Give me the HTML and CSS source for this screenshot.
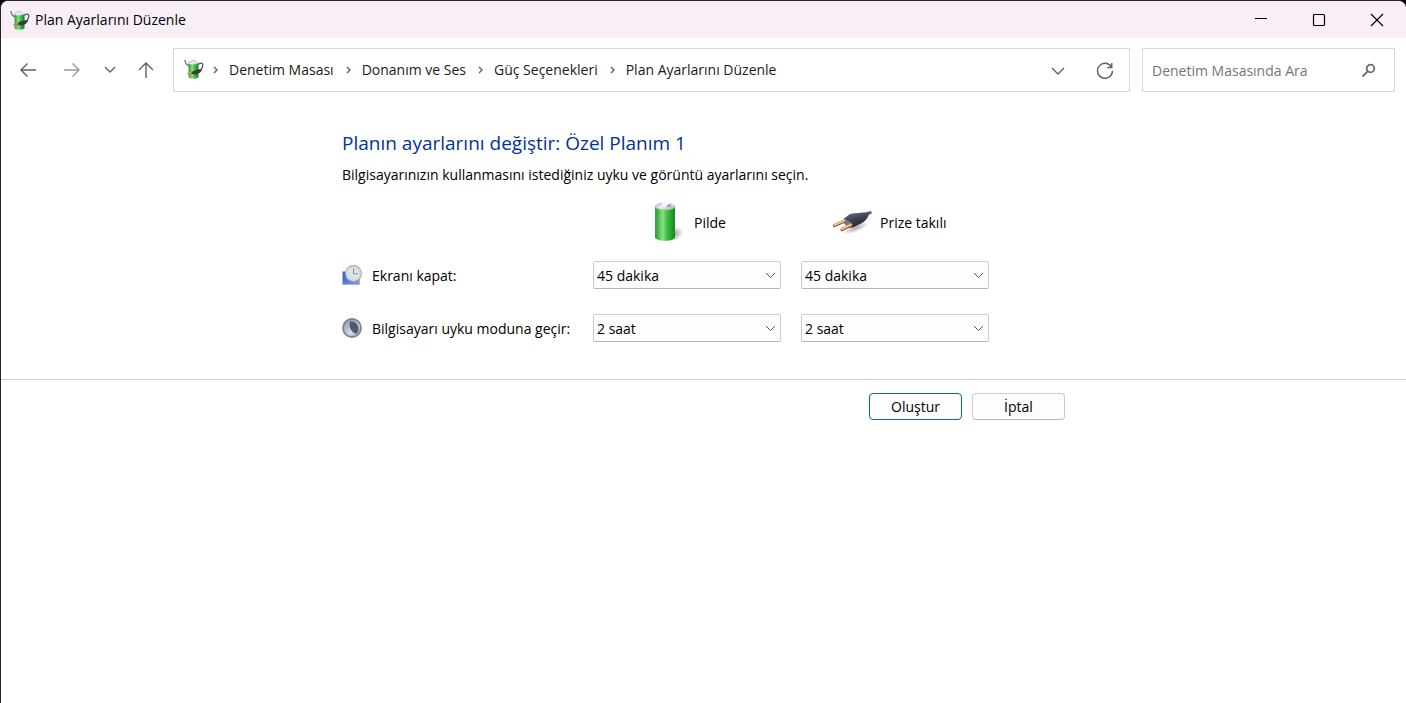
FILE: index.html
```html
<!DOCTYPE html>
<html lang="tr">
<head>
<meta charset="utf-8">
<meta name="viewport" content="width=device-width, initial-scale=1">
<title>Plan Ayarlarını Düzenle</title>
<link rel="stylesheet" href="styles.css">
</head>
<body>
<svg class="defs" width="0" height="0" aria-hidden="true">
  <defs>
    <linearGradient id="green" x1="0" x2="1" y1="0" y2="0">
      <stop offset="0" stop-color="#3a9c40"/><stop offset=".12" stop-color="#3fae43"/><stop offset=".38" stop-color="#86e285"/><stop offset=".6" stop-color="#3fc043"/><stop offset="1" stop-color="#14861d"/>
    </linearGradient>
    <linearGradient id="metal" x1="0" x2="1" y1="0" y2="1">
      <stop offset="0" stop-color="#a4a9bd"/><stop offset=".5" stop-color="#f4f5fa"/><stop offset="1" stop-color="#9ba1b5"/>
    </linearGradient>
    <symbol id="power" viewBox="0 0 20 20">
      <path d="M14.500 5.500c2-2.500 4.500-1.500 4.300 1-.2 2.500-1.800 3.500-2.300 6" fill="none" stroke="#4a4f70" stroke-width="1.300"/>
      <path d="M.8 1c.4 3 1.500 5 4.200 5.800" fill="none" stroke="#5a607c" stroke-width="1.200"/>
      <path d="M4.500 3.500v14.500c0 2.200 10 2.200 10 0V3.500z" fill="url(#green)"/>
      <ellipse cx="9.500" cy="3.500" rx="5" ry="2" fill="url(#metal)"/>
      <ellipse cx="9.500" cy="1.800" rx="2.500" ry="1.300" fill="#d0d6e4"/>
      <path d="M6.500 13.500l4-2 5.500-1.500 1.700 1-1.700 2.700-4 2-3.500-.2z" fill="#3c3c48"/>
      <path d="M7.500 13.200l-4 1.800M9.500 15.500l-4 1.500" stroke="#c99a58" stroke-width="1.300" stroke-linecap="round"/>
    </symbol>
  </defs>
</svg>
<div class="window">
  <header class="titlebar">
    <svg class="app-icon"><use href="#power"/></svg>
    <span class="title">Plan Ayarlarını Düzenle</span>
    <div class="caption-buttons">
      <button class="caption-button" type="button" aria-label="Simge durumuna küçült"><svg width="14" height="14"><path d="M1 5.500h12"/></svg></button>
      <button class="caption-button" type="button" aria-label="Ekranı kapla"><svg width="14" height="14"><rect x="1.500" y="1.500" width="11" height="11" rx="1"/></svg></button>
      <button class="caption-button" type="button" aria-label="Kapat"><svg width="14" height="14"><path d="M1 1l12 12M13 1L1 13"/></svg></button>
    </div>
  </header>

  <nav class="toolbar">
    <div class="history">
      <button class="nav-button" type="button" aria-label="Geri"><svg width="18" height="18"><path d="M2 9h15M8.500 2.500L2 9l6.500 6.500"/></svg></button>
      <button class="nav-button dim" type="button" aria-label="İleri"><svg width="18" height="18"><path d="M1 9h15M9.500 2.500L16 9l-6.500 6.500"/></svg></button>
      <button class="nav-button small" type="button" aria-label="Son konumlar"><svg width="12" height="18"><path d="M1 6l5 5 5-5"/></svg></button>
      <button class="nav-button" type="button" aria-label="Yukarı"><svg width="18" height="18"><path d="M9 17V2M2 9l7-7 7 7"/></svg></button>
    </div>
    <div class="address">
      <svg class="address-icon"><use href="#power"/></svg>
      <ol class="crumbs">
        <li><svg width="6" height="8"><path d="M1 1l3 3-3 3"/></svg><a href="#">Denetim Masası</a></li>
        <li><svg width="6" height="8"><path d="M1 1l3 3-3 3"/></svg><a href="#">Donanım ve Ses</a></li>
        <li><svg width="6" height="8"><path d="M1 1l3 3-3 3"/></svg><a href="#">Güç Seçenekleri</a></li>
        <li><svg width="6" height="8"><path d="M1 1l3 3-3 3"/></svg><a href="#">Plan Ayarlarını Düzenle</a></li>
      </ol>
      <button class="address-button" type="button" aria-label="Önceki konumlar"><svg width="14" height="18"><path d="M1 7l6 6 6-6"/></svg></button>
      <button class="address-button" type="button" aria-label="Yenile"><svg width="18" height="18"><path d="M15.500 6A7.500 7.500 0 1 0 16.500 10M15.800 2v4.500h-4.500"/></svg></button>
    </div>
    <div class="search">
      <input class="search-input" type="text" placeholder="Denetim Masasında Ara" aria-label="Denetim Masasında Ara">
      <button class="search-button" type="button" aria-label="Ara"><svg width="15" height="15"><circle cx="9.500" cy="5.500" r="3.800"/><path d="M6.800 8.200L1.500 13.500"/></svg></button>
    </div>
  </nav>

  <main class="content">
    <h1 class="heading">Planın ayarlarını değiştir: Özel Planım 1</h1>
    <p class="intro">Bilgisayarınızın kullanmasını istediğiniz uyku ve görüntü ayarlarını seçin.</p>
    <div class="settings">
      <div class="source battery">
        <svg width="40" height="40" viewBox="0 0 40 40">
          <defs><radialGradient id="shade"><stop offset="0" stop-color="#777" stop-opacity=".7"/><stop offset="1" stop-color="#777" stop-opacity="0"/></radialGradient></defs>
          <ellipse cx="28" cy="32" rx="10" ry="7" fill="url(#shade)" transform="rotate(-25 28 32)"/>
          <path d="M9 4.500v30.500c0 5 20 5 20 0V4.500z" fill="url(#green)"/>
          <ellipse cx="19" cy="4.500" rx="10" ry="3.800" fill="#a5d9a9"/>
          <ellipse cx="19" cy="4" rx="9" ry="3.200" fill="url(#metal)"/>
          <ellipse cx="20" cy="2.500" rx="4.500" ry="2" fill="#f8f8ff"/>
          <path d="M20 4l4-2.500 2 2.500-4 1.500z" fill="#a2a5ba"/>
        </svg>
        <span>Pilde</span>
      </div>
      <div class="source plug">
        <svg width="40" height="40" viewBox="0 0 40 40">
          <defs>
            <linearGradient id="body" x1="0" x2=".4" y1="0" y2="1"><stop offset="0" stop-color="#6c7189"/><stop offset=".5" stop-color="#3f4155"/><stop offset="1" stop-color="#242531"/></linearGradient>
            <radialGradient id="shadow"><stop offset="0" stop-color="#555" stop-opacity=".5"/><stop offset="1" stop-color="#555" stop-opacity="0"/></radialGradient>
          </defs>
          <ellipse cx="24" cy="26" rx="14" ry="4" fill="url(#shadow)" transform="rotate(-22 24 26)"/>
          <path d="M33 13c2-2 4-2.500 6.500-2" fill="none" stroke="#5d616d" stroke-width="3"/>
          <path d="M12 16.500l6-4.500c5-1 12-1.500 17-1.500l2 2c-2 5-5 8-10 10l-6 3-3 .5-6-4.500z" fill="url(#body)"/>
          <path d="M12 16.500l6.500 3.500 2.500 5.500-3 .5-6-4.500z" fill="#747889"/>
          <path d="M12.500 19L2.500 23.500M19 23L10 27.500" stroke="#80552d" stroke-width="3.200" stroke-linecap="round"/>
          <path d="M12.500 18.500L2.500 23M19 22.500L10 27" stroke="#efc48b" stroke-width="2" stroke-linecap="round"/>
        </svg>
        <span>Prize takılı</span>
      </div>

      <div class="setting">
        <svg width="20" height="20" viewBox="0 0 20 20">
          <defs><linearGradient id="screen" x1="0" x2="1" y1="0" y2="1"><stop offset="0" stop-color="#2f56c4"/><stop offset="1" stop-color="#7f9deb"/></linearGradient></defs>
          <path d="M.5 6.500L17.500 8v11.500H.5z" fill="url(#screen)" stroke="#a9b7dd"/>
          <circle cx="11.500" cy="8.500" r="7.900" fill="#dbe5ec" stroke="#a9adb2" stroke-width="1.200"/>
          <circle cx="11.500" cy="8.500" r="6" fill="none" stroke="#b4c6d4" stroke-dasharray="1 2.100"/>
          <path d="M11.500 3.500v5.200H16" fill="none" stroke="#8294a3" stroke-width="1.100"/>
        </svg>
        <span id="display-label">Ekranı kapat:</span>
      </div>
      <select class="choice" aria-labelledby="display-label"><option>45 dakika</option></select>
      <select class="choice" aria-labelledby="display-label"><option>45 dakika</option></select>

      <div class="setting">
        <svg width="20" height="20" viewBox="0 0 20 20">
          <defs><linearGradient id="moon" x1="0" x2="1" y1="0" y2="1"><stop offset="0" stop-color="#7c87a8"/><stop offset=".6" stop-color="#d3dbf5"/><stop offset="1" stop-color="#8490b5"/></linearGradient></defs>
          <circle cx="10" cy="10" r="9" fill="url(#moon)" stroke="#808288" stroke-width="1.800"/>
          <path d="M8 3.500c4-1 8.500 2 8.500 7 0 2.500-1 4.500-2.500 5.500C9 14 6.500 8.500 8 3.500z" fill="#555866"/>
        </svg>
        <span id="sleep-label">Bilgisayarı uyku moduna geçir:</span>
      </div>
      <select class="choice" aria-labelledby="sleep-label"><option>2 saat</option></select>
      <select class="choice" aria-labelledby="sleep-label"><option>2 saat</option></select>
    </div>
  </main>

  <footer class="footer">
    <div class="actions">
      <button class="action primary" type="button">Oluştur</button>
      <button class="action" type="button">İptal</button>
    </div>
  </footer>
</div>
</body>
</html>
```
FILE: styles.css
```css
* {
  box-sizing: border-box;
}

body {
  margin: 0;
  background: #000;
  color: #000;
  font: 14px/20px "Open Sans", "Noto Sans", sans-serif;
}

button,
input,
select {
  font: inherit;
  color: inherit;
}

button {
  padding: 0;
  border: 0;
  background: none;
}

svg {
  flex: none;
  fill: none;
}

.defs {
  position: absolute;
}

.window {
  min-height: 100vh;
  border-top: 1px solid #2b222b;
  border-left: 1px solid #2b222b;
  border-radius: 8px 8px 0 0;
  background: #fff;
  overflow: hidden;
}

.titlebar {
  display: flex;
  align-items: center;
  height: 37px;
  padding-left: 9px;
  background: #f8eef8;
}

.app-icon,
.address-icon {
  width: 20px;
  height: 20px;
}

.title {
  margin-left: 5px;
}

.caption-buttons {
  display: flex;
  margin-left: auto;
}

.caption-button {
  display: grid;
  place-items: center;
  width: 58px;
  height: 36px;
}

.caption-button svg {
  stroke: #000;
  stroke-width: 1.2;
}

.toolbar {
  display: flex;
  gap: 12px;
  padding: 10px 11px 0 0;
}

.history {
  display: flex;
  align-items: center;
  width: 160px;
  padding-left: 18px;
  gap: 26px;
}

.nav-button {
  display: grid;
  place-items: center;
}

.nav-button.small {
  margin: 0 -5px 0 -3px;
}

.nav-button svg,
.address-button svg {
  stroke: #5f5f5f;
  stroke-width: 1.4;
}

.nav-button.dim svg {
  stroke: #9a9a9a;
}

.address {
  display: flex;
  flex: 1;
  align-items: center;
  height: 44px;
  padding: 0 15px 0 10px;
  border: 1px solid #d9d9d9;
}

.address-icon {
  margin-bottom: 2px;
}

.crumbs {
  display: flex;
  flex: 1;
  margin: 0;
  padding: 0;
  list-style: none;
}

.crumbs li {
  display: flex;
  align-items: center;
  gap: 10px;
  padding-left: 12px;
}

.crumbs li:first-child {
  padding-left: 9px;
}

.crumbs svg {
  stroke: #5f5f5f;
  stroke-width: 1.4;
}

.crumbs a {
  color: #1a1a1a;
  text-decoration: none;
}

.address-button {
  display: grid;
  place-items: center;
  margin-left: 31px;
}

.search {
  display: flex;
  align-items: center;
  width: 253px;
  height: 44px;
  padding: 1px 18px 0 9px;
  border: 1px solid #d9d9d9;
}

.search-input {
  flex: 1;
  min-width: 0;
  padding: 0;
  border: 0;
  outline: 0;
  background: none;
}

.search-input::placeholder {
  color: #757575;
  opacity: 1;
}

.search-button {
  display: grid;
  place-items: center;
}

.search-button svg {
  stroke: #6b6b6b;
  stroke-width: 1.8;
}

.content,
.actions {
  max-width: 723px;
  margin: 0 auto;
}

.content {
  padding: 38px 0 37px;
}

.heading {
  margin: 0;
  color: #003399;
  font-size: 19px;
  font-weight: 400;
  line-height: 26px;
}

.intro {
  margin: 9px 0 0;
}

.settings {
  display: grid;
  grid-template-columns: 231px 188px 188px;
  column-gap: 20px;
  row-gap: 25px;
  align-items: center;
  margin-top: 17px;
}

.source {
  display: flex;
  align-items: center;
  gap: 8px;
  height: 40px;
  margin-bottom: -6px;
}

.source span,
.setting span {
  padding-top: 2px;
}

.battery {
  grid-column: 2;
  padding-left: 53px;
}

.plug {
  padding-left: 31px;
}

.setting {
  display: flex;
  align-items: center;
  gap: 10px;
  white-space: nowrap;
}

.choice {
  width: 100%;
  height: 28px;
  padding: 2px 24px 0 3px;
  border: 1px solid #ccc;
  border-bottom-color: #b5b5b5;
  border-radius: 2px;
  appearance: none;
  background: #fdfdfd url("data:image/svg+xml,%3Csvg xmlns='http://www.w3.org/2000/svg' width='11' height='7'%3E%3Cpath d='M1 1l4.500 4.500L10 1' fill='none' stroke='%23555'/%3E%3C/svg%3E") no-repeat right 4px center;
}

.footer {
  padding-top: 13px;
  border-top: 1px solid #ccc;
}

.actions {
  display: flex;
  justify-content: flex-end;
  gap: 10px;
}

.action {
  width: 93px;
  height: 27px;
  border: 1px solid #ccc;
  border-bottom-color: #b9b9b9;
  border-radius: 4px;
  background: #fdfdfd;
}

.action.primary {
  border-color: #0067c0;
}
```
